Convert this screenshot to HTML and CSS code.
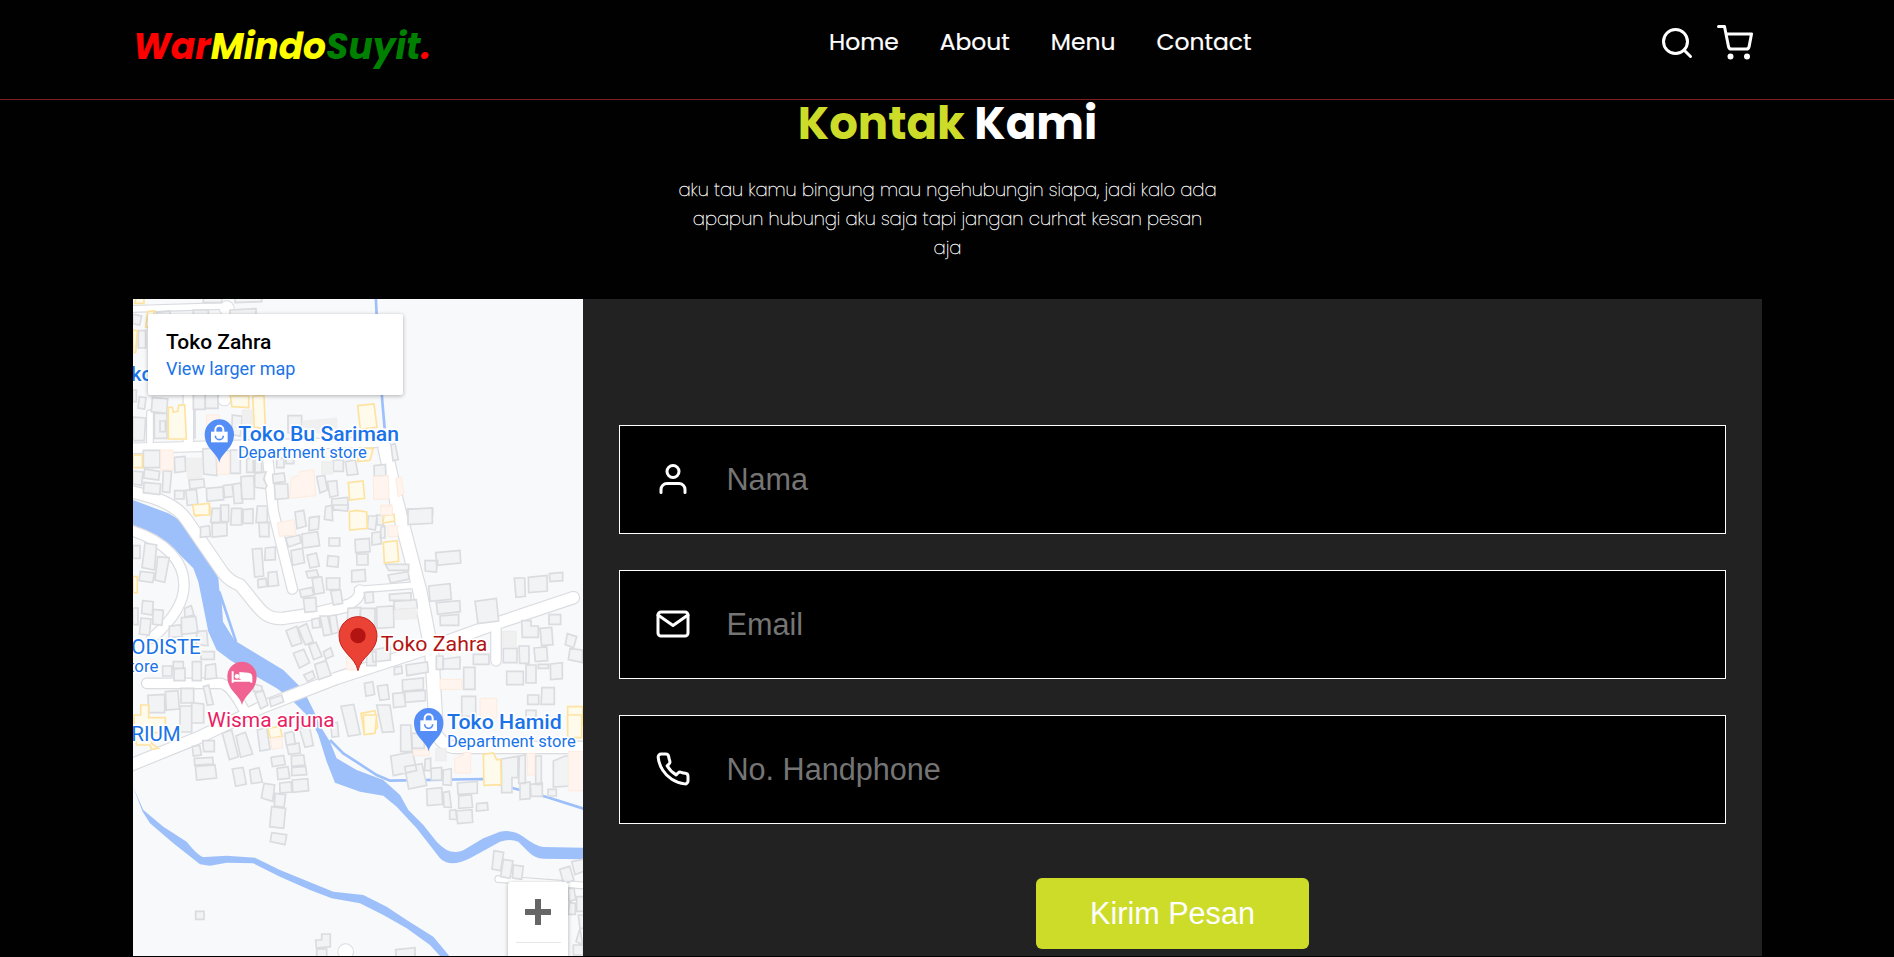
FILE: index.html
```
<!DOCTYPE html>
<html lang="id">
<head>
<meta charset="utf-8">
<title>WarMindoSuyit</title>
<link rel="stylesheet" href="styles.css">
</head>
<body>
<nav class="navbar">
  <a class="logo" href="#"><span class="red">War</span><span class="yellow">Mindo</span><span class="green">Suyit</span><span class="red">.</span></a>
  <div class="links"><a href="#">Home</a><a href="#">About</a><a href="#">Menu</a><a href="#">Contact</a></div>
  <div class="extra">
    <svg class="icon" viewBox="0 0 24 24"><circle cx="11" cy="11" r="8"/><path d="m21 21-4.350-4.350"/></svg>
    <svg class="icon" viewBox="0 0 24 24"><circle cx="9" cy="21" r="1"/><circle cx="20" cy="21" r="1"/><path d="M1 1h4l2.680 13.390a2 2 0 0 0 2 1.610h9.720a2 2 0 0 0 2-1.610L23 6H6"/></svg>
  </div>
</nav>
<section class="contact">
  <h2><span class="kontak">Kontak</span> <span>Kami</span></h2>
  <p class="intro">aku tau kamu bingung mau ngehubungin siapa, jadi kalo ada<br>apapun hubungi aku saja tapi jangan curhat kesan pesan<br>aja</p>
  <div class="row">
    <div class="map">
      <svg class="mapart" viewBox="9 12 1350 1971">
        <g class="water">
          <path d="M9 615 115 655 165 685 210 740 265 850 268 885 290 950 320 1040 460 1125 520 1185 550 1245 575 1300 600 1340 620 1390 680 1425 760 1455 810 1500 835 1545 880 1590 920 1640Q965 1690 1010 1660L1060 1630 1110 1610Q1150 1603 1180 1625 1220 1655 1240 1656L1359 1658V1693L1240 1691Q1215 1690 1195 1670L1165 1640Q1140 1630 1110 1640L1020 1690Q960 1720 930 1690L860 1600 800 1535 760 1502 690 1490 615 1463 590 1400 565 1320 540 1270 510 1240 475 1205 440 1180 380 1145 300 1095 260 1065 235 1010 215 910 205 860 190 820 130 760 80 720 9 695Z"/>
          <path d="M9 1475 40 1545 100 1595 170 1640Q210 1690 225 1686L290 1682 375 1688 450 1725 610 1790 700 1800 770 1835 830 1875 910 1925 958 1983H930L900 1950 830 1900 760 1860 690 1825 605 1810 540 1785 450 1745 370 1705 290 1703 240 1712 210 1708 130 1645 60 1585 38 1550Z"/>
        </g>
        <path class="ground" d="M275 920 315 1038 279 980Z"/>
        <path class="stream" d="M737 0 740 60 757 320 764 400M268 890 318 1040M600 1335 640 1375 740 1440 780 1457 1060 1452 1150 1480 1250 1506 1370 1544"/>
        <g class="casing">
          <path class="w18" d="M0 42 280 33M683 884 860 870M60 355V440M1105 1752 1370 1772"/>
          <path class="w28" d="M410 460 430 650 487 882M175 290V450M0 460 410 449 740 442M50 1165H270Q300 1165 345 1250M1098 1000V1098M0 705C110 740 162 800 162 870S100 1000 65 1030M690 885Q690 915 650 930"/>
          <path class="w36" d="M0 590C80 605 140 630 170 675L280 835Q300 860 330 870C390 940 400 975 460 970L560 955 650 933M-10 1415 200 1330 400 1235 620 1150 880 1065 1100 985 1330 908M905 1290Q930 1350 970 1357H1370"/>
          <path class="w42" d="M765 460 800 620 870 890 905 1070 918 1290"/>
          <circle cx="290" cy="40" r="21"/><circle cx="283" cy="312" r="19"/><circle cx="647" cy="1970" r="22"/>
        </g>
        <g class="road">
          <path class="w18" d="M0 42 280 33M683 884 860 870M60 355V440M1105 1752 1370 1772"/>
          <path class="w28" d="M410 460 430 650 487 882M175 290V450M0 460 410 449 740 442M50 1165H270Q300 1165 345 1250M1098 1000V1098M0 705C110 740 162 800 162 870S100 1000 65 1030M690 885Q690 915 650 930"/>
          <path class="w36" d="M0 590C80 605 140 630 170 675L280 835Q300 860 330 870C390 940 400 975 460 970L560 955 650 933M-10 1415 200 1330 400 1235 620 1150 880 1065 1100 985 1330 908M905 1290Q930 1350 970 1357H1370"/>
          <path class="w42" d="M765 460 800 620 870 890 905 1070 918 1290"/>
          <circle cx="290" cy="40" r="21"/><circle cx="283" cy="312" r="19"/><circle cx="647" cy="1970" r="22"/>
        </g>
        <path class="house" d="M220 5h55v18h-55zM315 5h80v15l-80 3zM9 58l26 5-6 27-20-4zM25 107h22v52h-22zM80 52l40-4v15h-40zM190 45h45v20h-45zM300 45l78-4v20h-78zM9 285h10v35H9zM28 305l20 3-4 34-20-3zM67 308l46 3-3 44-46-5zM9 366l38 3-4 68H9zM73 355h38v75H73zM90 378h16v32H90zM190 295h35v48h-35zM226 295h38v45h-38zM195 343v88M307 360l30 4-6 60-26-5zM474 362h41v52h-41zM40 466h50v52H40zM133 487l32-3 2 45-32 4zM218 462l40-3 3 83-40-5zM301 465h30v70h-30zM350 490h20v42h-20zM375 490h20v42h-20zM9 528l30 3-4 40-26-4zM44 522l45 7-3 26-45-6zM42 562l50 5-3 32-49-6zM100 527l25 2-6 64-22-3zM177 555l44-3 3 24-44 6zM134 587h28v25h-28zM167 586l32-3 5 45-32 3zM229 580l50-4 2 38-50 5zM280 572l26-4 5 36-27 4zM308 568l24-4 6 60-25 2zM333 545l38-3 2 38v32h-38zM374 535l34-4-7 22 10 20-5 8-32-4zM428 538l34-4 4 26-36 4zM433 567h40l2 43-39 3zM440 490h22v28h-22zM468 490h23v16h-23zM560 545l24-4 8 44-22 9zM592 560l28-3 4 44-24 6zM610 495h30v34h-30zM646 500l30-5 8 42-32 4zM732 512l34-4 2 35-35 2zM783 450l12-4 10 48-16 3zM605 612l48-5 2 34-48 6zM832 642h76v18h-76z"/>
        <g transform="translate(0 630)">
          <path class="house" d="M247 10h24v42h-29zM272 0h24v50h-22zM305 10h30v50h-33zM339 14l30-3v44h-30zM382 3h30v50h-34zM387 52h30v43h-28zM246 55l45-3v40l-44 4zM212 66l26-4 3 32-30 3zM495 21l26-5 8 47-28 8zM538 38l30-4-3 38-28 5zM587 5l19-4 2 46-25-4zM610 0h45l-3 18-42-4zM715 33h26l-5 42-24-4zM740 30h20v30h-18zM753 66l12-2v35h-14zM726 84l26-4 2 36-28 4zM834 13l73-4v46l-73 4zM9 122h21v38H9zM45 114l35 6-7 75-37-7zM83 155l35 3-14 74-29-7zM31 199l42 5-5 29-41-6zM367 132l28-2 6 83-27 3zM406 129l30-3v38l-32 2zM414 203l26-4 6 42-31 4zM383 224l25-4 3 24-26 4zM467 99l42-9 4 23-38 13zM516 87l47-7 6 42-51 7zM483 137l34-7 7 43-36 8zM531 151l28-7 9 39-28 6zM597 99h32v24h-32zM594 152l32 3-2 31-33-3zM675 104l43-4 2 40-43 3zM680 147h34v33h-33zM528 200l32-5 6 19-32 5zM546 220l29-5 8 48-29 5zM589 219h40v35h-39zM508 255l38-8 5 23-37 7zM520 280l37-3 3 42-35 3zM602 258l30-3 6 40-28 5zM665 197l40-4 2 35-42 3zM766 178h70v18h-60zM774 210l60-10 4 22-56 12zM703 263l26-3 2 32-25 2zM778 268l65-5v23h-64zM791 289l68-5 3 26-68 5zM885 167h38l-4 34-33-3zM917 143l73-7 2 38-72 7zM896 243l64-7 4 47-64 6zM919 293l70-6 2 33-68 8zM930 333l56-5v33h-55zM1153 219h31l2 55-28 3zM1195 217l56-6 1 47-56 5zM1258 206l40-4v25l-38 3zM1035 289l64-9 7 68-62 8zM1257 329h35v29h-35zM1175 347h28v16h22v34h-48zM1230 370l35-3 4 52-34 3zM1312 386l28 9-9 33-25-9zM1320 431l38 4v38l-43-9zM1212 429l38-3 3 41-37 3zM1167 423h30v52h-28zM1120 430h41v43h-41zM1030 448h47v30h-47zM919 453h20v40h-20zM940 462l50-6v36h-50zM1001 487h34v66h-34zM1130 499h50v40h-50zM1188 480h30v54h-30zM1225 478h30v12h-30zM1261 477l36-4v48l-35 3zM9 309h15v50H9zM38 287l32 3-3 40-32-5zM70 313l30 3-4 45-28-4zM33 339l30 3-5 48-30-3zM164 310l20-8 8 28-28 6zM154 338l43-4 7 49-49 5zM118 364l33-5 6 36-40 3zM200 380l30-3 4 45-35-3zM213 440h40v23h-40zM187 470h27v57h-27zM130 470h30v20h-30zM132 492l33-3v38h-33zM98 483h28v30h-28zM227 481l29-5 4 43-35 4zM220 545l16-5 14 58-18 3zM468 377l32-13 16 50-30 10zM504 368l26-12 20 54-24 10zM536 420l22-8 18 42-25 10zM580 440l22-12 8 24-23 10zM490 445l31-12 18 40-31 16zM554 478l34-11 15 44-37 13zM521 510l27-12 7 20-22 12zM545 343l22-4 4 28-23 2zM570 333h23l12 55-23 4zM598 333l20-3 8 52-20 5zM654 310l38-3-4 40-36 3zM692 310h43v60h-45zM740 306l50-3 2 64-51 3zM726 435l55-10v40l-52 6zM710 440h28v42h-28zM793 487l22-4 2 22-24 4zM828 480l64-9 3 30-64 11zM817 525l63-6v34l-62 6zM824 561l62-5v31l-60 5zM703 535l25-5 6 38-26 6zM742 543l30-4 6 43-28 4zM788 566l34-4 5 42-36 4zM995 574h42v60h-42zM1193 570h33v28h-33zM1236 548h37v50h-40zM1188 616h30v23h-30zM633 604l38-6 20 90-36 6zM740 600h40l12 80-35 2zM418 583l37-13 6 20-38 15zM375 565l24-9 15 44-22 12zM54 571l50-3v55H56zM106 560l38-3 4 55-39 3zM153 550h38v44h-38zM150 603h35v78h-35zM185 593l36 4v57h-36zM370 536l26 8v15h-26z"/>
          <path class="shop" d="M190 5h50v22l-45 6zM658 20l22-4 30 5 2 49-53 5zM762 31l30-3 2 20-35 6zM760 112l41-5 5 62-43 5zM9 215h13v48H9zM32 600h24v38h50v45H12v-53h20zM693 625l42-8 8 50-20 20h-20zM1313 605h45v55h-45z"/>
          <path class="pale" d="M442 54l49-10 7 46-50 4zM753 0h33v22h-33zM774 62h29v33h-29zM930 523h65v30h-65zM650 455h30v40h-30zM1050 580h50v60h-50z"/>
          <path class="dim" d="M794 314l67-5v32l-67 3zM1118 378h41v46h-41z"/>
        </g>
        <path class="shop" d="M20 5h22v20H14zM53 50l20-3-2 53-24-4zM9 105l13 2-5 65H9zM115 337h12l3 14 14-2 2-18 18-2 5 103h-54zM301 303h55v35l-50-3zM368 304l34-3 4 100-33-4zM683 332l49-5 9 70-50 5zM9 480h28v38H9zM655 563l44-5 5 52-45 5zM188 630l50-5v35h-45zM685 460h45l-10 36-36 4z"/>
        <path class="pale" d="M92 465h38v60H92zM260 475h38v63h-35zM230 360h38v30h-38zM484 548l25-8v-10l42-6 6 78-78 8zM730 545l45-3 2 70-46 2zM797 550l17-3 8 50-18 8zM752 635h35v25h-35z"/>
        <path class="dim" d="M337 345h30v44h-30zM169 490h46v60h-42zM516 379l104-10v40l-102 8zM575 500h34v37h-34z"/>
        <g transform="translate(0 1260)">
          <path class="house" d="M187 94l22-3 5 29-24 3zM218 77h35v33h-32zM277 55l28-10 20 80-27 9zM318 62l28-10 22 65-36 10zM382 45l28-7 10 65-30 5zM464 55l26-6 6 38-27 3zM508 40l30-8 12 60-25 5zM470 90l37-6 4 30-35 4zM602 26l20-4 4 42-20 2zM193 130l55-3 2 20-56 3zM196 154l59-4 5 39-60 6zM307 162l32-5 10 50-32 7zM359 165l28-7 10 43-33 5zM423 127l38-6 5 28-39 6zM484 123l37-3 4 30-40 4zM485 158l42-4 3 25-45 3zM441 160l33-5 5 35-35 4zM402 205l32 5-6 49-34-10zM449 204l34-3 3 30-36 3zM487 195l46-4 3 36-48 5zM435 235l32 4-5 38-29-4zM425 275l42 5-6 60-42-5zM425 353l45 6-5 30-44-9zM812 30h30l4 80h-34zM845 55h38v45h-36zM782 123l66-12 12 56-70 15zM824 155l52-9 14 65-54 11zM885 133l17-4v38h-18zM903 160l32-3v38h-31zM940 165l24-4v50l-25-2zM982 204l60-5v36l-58 3zM890 222l45-4 3 50-46 4zM940 232l18-3 6 49-22-2zM986 243l38-4 4 38-42 3zM1040 266l32-3 2 22-35 3zM959 287l18-3 4 30-22-2zM979 288l47-4 2 38-45 4zM1114 132l50-8v64h-18v45h-31zM1168 123l18-3v85h-20zM1217 123h17v85h-17zM1270 138l35-15h13v90l-48 3zM1170 205l30-4v50l-30 3zM1201 208l36-4v40h-34zM1254 223h25v20h-25zM1092 407l29 5-9 55-26-5zM1120 433l29 5-9 52-28-5zM1150 450l30 4-5 39-27-4zM1289 463l30-9 13 42-31 10zM1325 440l40-8v36l-30 11zM1314 520h18l5 34-20 5zM1340 545h25v44h-25zM1318 563l18 2v33h-22zM1345 600h20v40h-15zM1350 640l-12 40 20 10zM1330 690h30v30h-30zM197 589h25v24h-25zM557 675h18v-18h26v38l-42 4zM560 702h30v25h-30zM797 704l58-6v30h-57z"/>
          <path class="shop" d="M15 65l50-5v25l20 15-20 3-5-13H20zM414 40l35-6 8 30-36 5zM700 0h40l-5 55-32 4zM1060 118l30-4 10 20h12l2 75-52 2zM1313 0h42v68h-42z"/>
          <path class="pale" d="M420 70l35-4 3 32-32 6zM850 105h48v17h-48zM974 130l26-10v-8h22v62h-47zM1192 115h22v65h-22zM1315 110h50v117h-50z"/>
          <path class="dim" d="M917 100h32v38h-32z"/>
        </g>
        <defs>
          <path id="pin" d="M0 86C-6 55-44 45-44 0A44 44 0 0 1 44 0C44 45 6 55 0 86Z"/>
          <g id="bag"><path d="M-25-7h50v32h-50z" fill="#fff"/><path d="M-12-5v-8a12 12 0 0 1 24 0v8" fill="none" stroke="#fff" stroke-width="6"/><path d="M-12 5a12 12 0 0 0 24 0" fill="none" stroke="#548df5" stroke-width="5"/></g>
        </defs>
        <g fill="#548df5" transform="translate(268 417)"><use href="#pin"/><use href="#bag"/></g>
        <g fill="#548df5" transform="translate(896 1283)"><use href="#pin"/><use href="#bag"/></g>
        <g fill="#f06292" transform="translate(336 1144)"><use href="#pin"/><path d="M-28-15v34M-28 13h56M28 19V2Q28-7 18-8L-5-10v18" fill="none" stroke="#fff" stroke-width="6"/><path d="M-4-10 20-8Q28-6 28 12H-4Z" fill="#fff"/><circle cx="-15" cy="0" r="7" fill="#fff"/></g>
        <g transform="translate(684 1022)"><path d="M0 105C-8 62-57 50-57 0A57 57 0 0 1 57 0C57 50 8 62 0 105Z" fill="#ea4335" stroke="#c5221f" stroke-width="3"/><circle r="23" fill="#b31412"/></g>
        <g class="labels">
          <text class="bold blue" x="325" y="438" font-size="60" textLength="482" lengthAdjust="spacingAndGlyphs">Toko Bu Sariman</text>
          <text class="blue" x="324" y="489" font-size="47" textLength="386" lengthAdjust="spacingAndGlyphs">Department store</text>
          <text class="bold blue" x="951" y="1303" font-size="60" textLength="344" lengthAdjust="spacingAndGlyphs">Toko Hamid</text>
          <text class="blue" x="951" y="1355" font-size="47" textLength="386" lengthAdjust="spacingAndGlyphs">Department store</text>
          <text class="bold blue" x="3" y="258" font-size="60">ko</text>
          <text class="blue" x="4" y="1077" font-size="60" textLength="208" lengthAdjust="spacingAndGlyphs">ODISTE</text>
          <text class="blue" x="-3" y="1130" font-size="47" textLength="88" lengthAdjust="spacingAndGlyphs">tore</text>
          <text class="blue" x="4" y="1339" font-size="60" textLength="148" lengthAdjust="spacingAndGlyphs">RIUM</text>
          <text class="maroon" x="752" y="1067" font-size="60" textLength="320" lengthAdjust="spacingAndGlyphs">Toko Zahra</text>
          <text class="pink" x="232" y="1296" font-size="60" textLength="382" lengthAdjust="spacingAndGlyphs">Wisma arjuna</text>
        </g>
      </svg>
      <div class="place"><strong>Toko Zahra</strong><a href="#">View larger map</a></div>
      <div class="zoom"><span class="plus"></span></div>
    </div>
    <form class="form">
      <label class="field"><svg class="icon" viewBox="0 0 24 24"><path d="M20 21v-2a4 4 0 0 0-4-4H8a4 4 0 0 0-4 4v2"/><circle cx="12" cy="7" r="4"/></svg><input type="text" placeholder="Nama"></label>
      <label class="field"><svg class="icon" viewBox="0 0 24 24"><path d="M4 4h16c1.100 0 2 .9 2 2v12c0 1.100-.9 2-2 2H4c-1.100 0-2-.9-2-2V6c0-1.100.9-2 2-2z"/><path d="m22 6-10 7L2 6"/></svg><input type="text" placeholder="Email"></label>
      <label class="field"><svg class="icon" viewBox="0 0 24 24"><path d="M22 16.920v3a2 2 0 0 1-2.180 2 19.790 19.790 0 0 1-8.630-3.070 19.500 19.500 0 0 1-6-6 19.790 19.790 0 0 1-3.070-8.670A2 2 0 0 1 4.110 2h3a2 2 0 0 1 2 1.720 12.840 12.840 0 0 0 .7 2.810 2 2 0 0 1-.45 2.110L8.090 9.910a16 16 0 0 0 6 6l1.270-1.270a2 2 0 0 1 2.110-.45 12.840 12.840 0 0 0 2.810.7A2 2 0 0 1 22 16.920z"/></svg><input type="text" placeholder="No. Handphone"></label>
      <button class="send" type="button">Kirim Pesan</button>
    </form>
  </div>
</section>
</body>
</html>
```
FILE: styles.css
```
* { box-sizing: border-box; margin: 0; padding: 0; }
body { height: 957px; overflow: hidden; background: #010101; color: #fff; font-family: Poppins, Inter, sans-serif; }
a { text-decoration: none; }
.icon { flex: none; width: 36px; height: 36px; fill: none; stroke: #fff; stroke-width: 2; stroke-linecap: round; stroke-linejoin: round; }

.navbar { display: grid; grid-template-columns: 696px 1fr auto; height: 100px; padding: 0 133px; border-bottom: 1px solid #7c1e23; }
.logo { padding: 25px 0 0; font-size: 36px; line-height: 44px; font-weight: 700; font-style: italic; white-space: nowrap; }
.red { color: red; }
.yellow { color: yellow; }
.green { color: green; }
.links { display: flex; gap: 41px; padding-top: 22px; font-size: 23.4px; line-height: 40px; -webkit-text-stroke: .2px #fff; }
.links a { color: #fff; white-space: nowrap; }
.extra { display: flex; gap: 22px; padding: 25px 8px 0 0; }

.contact h2 { height: 47px; padding: 1px 0 0 1px; text-align: center; font-size: 45px; line-height: 46px; white-space: nowrap; }
.kontak { color: #cddc29; }
.intro { height: 152px; padding: 28px 0 0 1px; font-size: 18px; line-height: 29px; font-weight: 100; text-align: center; -webkit-text-stroke: .3px #fff; }
.row { display: flex; width: 1629px; height: 657px; margin-left: 133px; background: #222; overflow: hidden; }

.map { position: relative; flex: none; width: 450px; height: 657px; overflow: hidden; background: #f8f9fb; }
.mapart { display: block; width: 450px; height: 657px; }
.water { fill: #9dc0fa; }
.stream { fill: none; stroke: #9dc0fa; stroke-width: 8; }
.ground { fill: #f8f9fb; }
.casing, .road { fill: none; stroke-linecap: round; stroke-linejoin: round; }
.casing { stroke: #dadce0; }
.road { stroke: #fff; }
.casing circle { fill: #dadce0; stroke-width: 6; }
.road circle { fill: #fff; stroke: none; }
.casing .w18 { stroke-width: 24; }
.casing .w28 { stroke-width: 35; }
.casing .w36 { stroke-width: 41; }
.casing .w42 { stroke-width: 46; }
.road .w18 { stroke-width: 17; }
.road .w28 { stroke-width: 28; }
.road .w36 { stroke-width: 34; }
.road .w42 { stroke-width: 39; }
.house { fill: #f1f3f4; stroke: #dadce0; stroke-width: 5; }
.shop { fill: #fffbec; stroke: #fee3a0; stroke-width: 5; }
.pale { fill: #fff5ee; stroke: #fdebdf; stroke-width: 3; }
.dim { fill: #f0f0f0; stroke: #ebebeb; stroke-width: 2; }
.labels text { font-family: Roboto, sans-serif; stroke: #fff; stroke-width: 10; stroke-linejoin: round; paint-order: stroke; }
.labels .bold { font-weight: 500; }
.blue { fill: #1a73e8; }
.maroon { fill: #b31412; }
.pink { fill: #e91e63; }
.place { position: absolute; left: 15px; top: 15px; display: flex; flex-direction: column; width: 255px; height: 81px; padding: 15px 18px; border-radius: 2px; background: #fff; box-shadow: 0 1px 4px rgba(0, 0, 0, .3); font-family: Roboto, sans-serif; }
.place strong { color: #000; font-size: 21px; line-height: 26px; font-weight: 500; }
.place a { color: #1a73e8; font-size: 18px; line-height: 27px; }
.zoom { position: absolute; left: 375px; top: 583px; display: flex; flex-direction: column; align-items: center; width: 60px; height: 90px; padding-top: 17px; border-radius: 3px; background: #fff; box-shadow: 0 1px 4px rgba(0, 0, 0, .3); }
.zoom::after { content: ""; width: 45px; height: 1px; margin-top: 17px; background: #e6e6e6; }
.plus { width: 26px; height: 26px; background: linear-gradient(#666, #666) center / 26px 6px no-repeat, linear-gradient(#666, #666) center / 6px 26px no-repeat; }

.form { display: flex; flex: 1; flex-direction: column; align-items: center; padding: 126px 36px 0; }
.field { display: flex; flex: none; align-items: center; width: 100%; height: 109px; margin-bottom: 36px; padding-left: 35px; border: 1px solid #fff; background: #000; }
.field .icon { margin-bottom: 1px; }
.field input { width: 900px; height: 60px; margin-left: 35.5px; border: 0; outline: 0; background: transparent; color: #fff; font: 30.6px "Liberation Sans", Arial, sans-serif; }
.field input::placeholder { color: #757575; }
.send { width: 273px; height: 71px; margin-top: 18px; border: 0; border-radius: 6px; background: #cddc29; color: #fff; font: 30.6px "Liberation Sans", Arial, sans-serif; }
```
